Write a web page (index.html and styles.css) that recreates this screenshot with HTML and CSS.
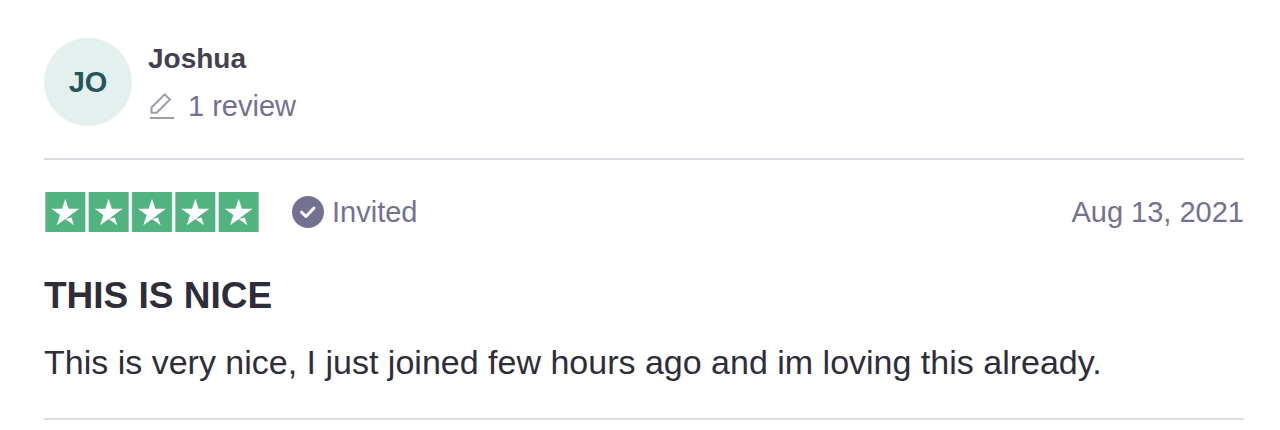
FILE: index.html
```
<!DOCTYPE html>
<html lang="en">
<head>
    <meta charset="UTF-8">
    <meta name="viewport" content="width=device-width, initial-scale=1">
    <title>Joshua's review</title>
    <link rel="stylesheet" href="styles.css">
</head>

<body>
    <article class="review-card">
        <!-- Reviewer -->
        <header class="consumer">
            <div class="avatar">JO</div>
            <div class="consumer-info">
                <a class="consumer-name" href="#">Joshua</a>
                <div class="consumer-details">
                    <svg class="pencil-icon" viewBox="0 0 28 28" aria-hidden="true">
                        <path d="M3.5 15.5 16.7 2.3l5.2 5.2L8.7 20.7H3.5z" fill="none" stroke="currentColor" stroke-width="2"/>
                        <path d="M2 26h24" stroke="currentColor" stroke-width="2"/>
                    </svg>
                    <span>1 review</span>
                </div>
            </div>
        </header>

        <!-- Rating, label and date -->
        <div class="review-header">
            <svg class="stars" viewBox="0 0 512 96" role="img" aria-label="5 stars">
                <defs>
                    <g id="star">
                        <path fill="#51b380" d="M0 0h96v96H0z"/>
                        <path fill="#fff" d="M48 64.7 62.6 61l6.1 18.8zM81.6 40.400H55.9L48 16.2l-7.9 24.2H14.4l20.8 15-7.9 24.2 20.8-15 12.8-9.2z"/>
                    </g>
                </defs>
                <use href="#star"/>
                <use href="#star" x="104"/>
                <use href="#star" x="208"/>
                <use href="#star" x="312"/>
                <use href="#star" x="416"/>
            </svg>
            <div class="label">
                <svg class="check-icon" viewBox="0 0 32 32" aria-hidden="true">
                    <circle cx="16" cy="16" r="16" fill="currentColor"/>
                    <path d="m9.5 16.200 4.500 4.300 8-8.500" fill="none" stroke="#fff" stroke-width="3" stroke-linecap="round" stroke-linejoin="round"/>
                </svg>
                <span>Invited</span>
            </div>
            <time class="date" datetime="2021-08-13">Aug 13, 2021</time>
        </div>

        <!-- Review text -->
        <div class="review-content">
            <h2>THIS IS NICE</h2>
            <p>This is very nice, I just joined few hours ago and im loving this already.</p>
        </div>
    </article>
</body>
</html>
```

FILE: styles.css
```
body {
    font-family: "Liberation Sans", Helvetica, Arial, sans-serif;
    background-color: #fff;
    margin: 0;
    color: #2f2d3a;
}

/* Review Card */
.review-card {
    margin: 0 36px 0 44px;
    padding-top: 38px;
    border-bottom: 2px solid #dcdce6;
}

/* Reviewer */
.consumer {
    display: flex;
    gap: 16px;
    padding-bottom: 32px;
    border-bottom: 2px solid #dcdce6;
}

.avatar {
    display: flex;
    align-items: center;
    justify-content: center;
    width: 88px;
    height: 88px;
    border-radius: 50%;
    background-color: #e3f0ed;
    color: #26555a;
    font-size: 29px;
    font-weight: bold;
}

.consumer-name {
    display: block;
    color: #43414f;
    font-size: 28px;
    font-weight: bold;
    line-height: 42px;
    text-decoration: none;
}

.consumer-details {
    display: flex;
    align-items: center;
    gap: 12px;
    margin-top: 6px;
    color: #73718f;
    font-size: 29px;
    line-height: 40px;
}

.pencil-icon {
    width: 28px;
    height: 28px;
    color: #9e9cb0;
}

/* Rating Row */
.review-header {
    display: flex;
    align-items: center;
    padding-top: 32px;
    color: #73718f;
    font-size: 29px;
    line-height: 40px;
}

.stars {
    width: 216px;
    height: 40px;
}

.label {
    display: flex;
    align-items: center;
    gap: 8px;
    margin-left: 32px;
}

.check-icon {
    width: 32px;
    height: 32px;
}

.date {
    margin-left: auto;
}

/* Review Text */
.review-content {
    padding: 40px 0 32px;
}

h2 {
    margin: 0;
    font-size: 37px;
    line-height: 48px;
}

p {
    margin: 18px 0 0;
    font-size: 34px;
    line-height: 48px;
}
```
